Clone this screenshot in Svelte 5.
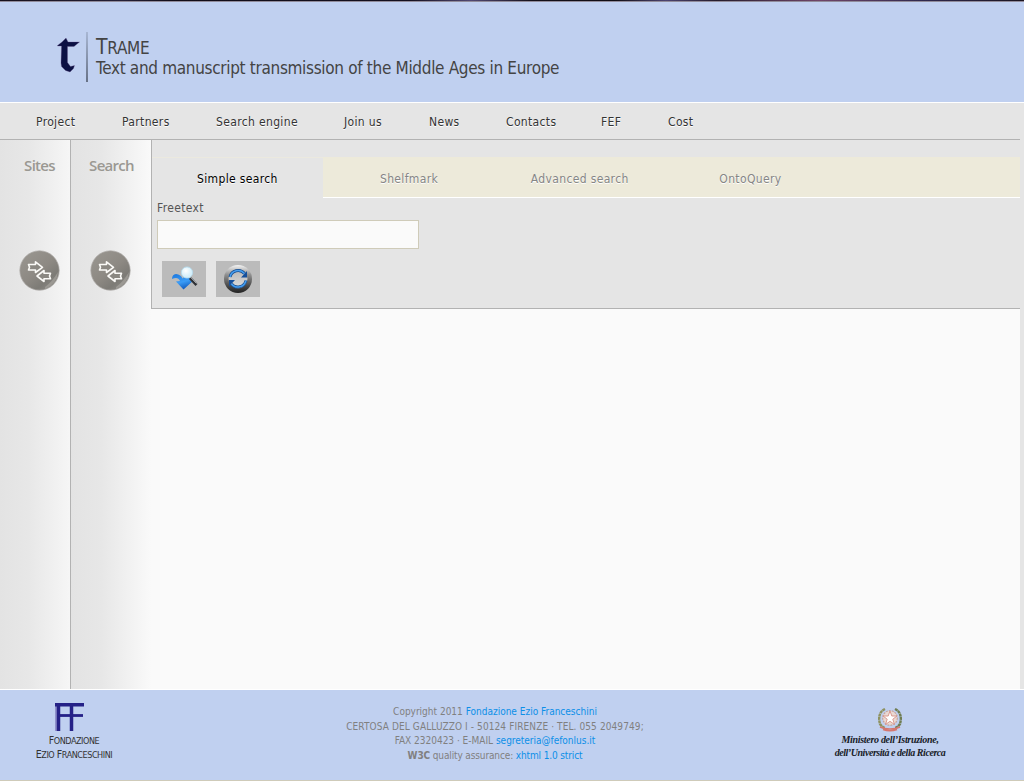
<script>
  const menu = [
    { label: 'Project', width: 86 },
    { label: 'Partners', width: 94 },
    { label: 'Search engine', width: 128 },
    { label: 'Join us', width: 85 },
    { label: 'News', width: 77 },
    { label: 'Contacts', width: 95 },
    { label: 'FEF', width: 67 },
    { label: 'Cost', width: 72 }
  ];
  const tabs = ['Simple search', 'Shelfmark', 'Advanced search', 'OntoQuery'];
  const panels = ['Sites', 'Search'];
  let active = $state(0);
  let query = $state('');
</script>

<div class="page">
  <header>
    <svg class="logo" width="30" height="50" viewBox="0 0 30 50">
      <path d="M1.500 13.500 L6 10 L10 6 L12 10 L23.500 10 L18 14.500 H11.500 V30.500 L14.500 34.500 L18.500 33.500 L17.500 36.500 L14 40 L9.500 38.500 L5.500 34.500 L5 31 L5.500 14 L1.500 14Z" fill="#0b1043" stroke="#6b4d84" stroke-width=".3" />
    </svg>
    <div class="titles">
      <h1>T<small>RAME</small></h1>
      <p>Text and manuscript transmission of the Middle Ages in Europe</p>
    </div>
  </header>

  <div class="body">
    <nav>
      {#each menu as item}
        <a href="#top" style:width="{item.width}px">{item.label}</a>
      {/each}
    </nav>
    <div class="columns">
      {#each panels as name}
        <aside>
          <h2>{name}</h2>
          <svg width="42" height="42" viewBox="0 0 42 42">
            <defs>
              <linearGradient id="disc-{name}" x1="0" y1="0" x2=".8" y2="1">
                <stop offset="0" stop-color="#9b9892" />
                <stop offset=".55" stop-color="#8d8983" />
                <stop offset=".8" stop-color="#7d7b76" />
                <stop offset="1" stop-color="#8d8b87" />
              </linearGradient>
            </defs>
            <circle cx="21.500" cy="20.500" r="19.700" fill="url(#disc-{name})" stroke="#b0aeaa" stroke-width=".7" />
            <path d="M27 37 Q34 32 40 22 Q39 34 27 39Z" fill="#a5a29d" opacity=".7" />
            <g fill="#8b8882" stroke="#fbfaf7" stroke-width="1.600" stroke-linejoin="round">
              <path d="M10.500 14.500 H17.500 V11.800 L24.500 17.300 L17.500 22.500 V20 H10.500 L11.500 17.300Z" />
              <path d="M19 26 L26 20.500 V23.300 H32.500 L31.500 26 L32.500 28.800 H26 V31.500Z" />
            </g>
          </svg>
        </aside>
      {/each}
      <main>
        <section>
          <div class="tabs">
            {#each tabs as tab, i}
              <button class="tab" class:active={i === active} onclick={() => (active = i)}>{tab}</button>
            {/each}
          </div>
          <form onsubmit={(e) => e.preventDefault()}>
            <label for="freetext">Freetext</label>
            <input id="freetext" type="text" bind:value={query} />
            <div class="actions">
              <button type="submit" aria-label="Search">
                <svg width="44" height="36" viewBox="0 0 44 36">
                  <defs>
                    <linearGradient id="arrow" x1="0" y1="0" x2=".4" y2="1">
                      <stop offset="0" stop-color="#1b76dd" /><stop offset=".6" stop-color="#3b9cf6" /><stop offset="1" stop-color="#1560c2" />
                    </linearGradient>
                    <radialGradient id="lens" cx=".4" cy=".35">
                      <stop offset="0" stop-color="#fff" /><stop offset="1" stop-color="#d5effa" />
                    </radialGradient>
                  </defs>
                  <path d="M10 18 Q10 13.500 14 13 Q19 13.500 20.500 17.500 L23 15 L32 19 L21.500 28.500 L14 20.500 L18 20 Q16 15 10 18Z" fill="url(#arrow)" />
                  <path d="M28 17 L34.500 24" stroke="#303236" stroke-width="2.800" />
                  <path d="M28.300 16 L34.500 22.500" stroke="#b4babd" stroke-width=".9" />
                  <circle cx="25" cy="11.500" r="5.600" fill="url(#lens)" stroke="#b3dcf0" stroke-width=".8" />
                </svg>
              </button>
              <button type="reset" aria-label="Reset" onclick={() => (query = '')}>
                <svg width="44" height="36" viewBox="0 0 44 36">
                  <defs>
                    <linearGradient id="rim" x1="0" y1="0" x2="0" y2="1">
                      <stop offset="0" stop-color="#f4f4f4" /><stop offset=".35" stop-color="#8f8f8f" /><stop offset=".75" stop-color="#484848" /><stop offset="1" stop-color="#222" />
                    </linearGradient>
                    <linearGradient id="hub" x1="0" y1="0" x2="0" y2="1"><stop offset="0" stop-color="#b5b5b5" /><stop offset="1" stop-color="#dedede" /></linearGradient>
                  </defs>
                  <circle cx="22" cy="18" r="14" fill="url(#rim)" />
                  <circle cx="22" cy="17.700" r="9.500" fill="url(#hub)" />
                  <g fill="none" stroke="#174b8c" stroke-width="3">
                    <path d="M14 16 A8.300 8.300 0 0 1 28.500 12.500" /><path d="M30 19.500 A8.300 8.300 0 0 1 15.500 23" />
                  </g>
                  <path d="M31 10 V16.500 H25Z M13 25.500 V19 H19Z" fill="#17509b" />
                  <g fill="none" stroke="#459ef0" stroke-width="1.500">
                    <path d="M14 16 A8.300 8.300 0 0 1 28.500 12.500" /><path d="M30 19.500 A8.300 8.300 0 0 1 15.500 23" />
                  </g>
                </svg>
              </button>
            </div>
          </form>
        </section>
      </main>
    </div>
  </div>

  <footer>
    <div class="fef">
      <svg width="32" height="30" viewBox="0 0 32 30">
        <path d="M2 1 V29" stroke="#8f91cb" stroke-width="2" />
        <path d="M1 2.700 H30 M4.500 1 V29 M17.500 1 V29" stroke="#252187" stroke-width="3.500" fill="none" />
        <path d="M4 13.500 H29" stroke="#252187" stroke-width="2.800" />
      </svg>
      <div>F<small>ONDAZIONE</small></div>
      <div>E<small>ZIO</small> F<small>RANCESCHINI</small></div>
    </div>
    <div class="info">
      <p class="l1">Copyright 2011 <a href="#top">Fondazione Ezio Franceschini</a></p>
      <p class="l2">CERTOSA DEL GALLUZZO I - 50124 FIRENZE · TEL. 055 2049749;</p>
      <p class="l3">FAX 2320423 · E-MAIL <a href="#top">segreteria@fefonlus.it</a></p>
      <p class="l4"><b>W3C</b> quality assurance: <a href="#top">xhtml 1.0 strict</a></p>
    </div>
    <div class="ministry">
      <svg width="24" height="27" viewBox="48 0 24 27">
        <g fill="none">
          <path d="M55 3 Q47 7 50 18 Q52 21 55 22" stroke="#8d915f" stroke-width="2.400" stroke-dasharray="3 .4" />
          <path d="M65 3 Q73 7 70 18 Q68 21 65 22" stroke="#6f7d52" stroke-width="2.400" stroke-dasharray="3 .4" />
          <circle cx="60" cy="12" r="7.300" fill="#ead9d2" stroke="#c6a49c" stroke-width="1.200" stroke-dasharray="2 1" />
          <path d="M60 5 L61.800 10 H67 L62.800 13.200 L64.500 18.500 L60 15.300 L55.500 18.500 L57.200 13.200 L53 10 H58.200Z" fill="#fff" stroke="#d79187" stroke-width=".9" />
          <path d="M50 21 Q54 23 60 23 Q66 23 70 21 M53 23.500 Q60 26 67 23.500" stroke="#d5766f" stroke-width="1.700" />
        </g>
      </svg>
      <div>Ministero dell’Istruzione,</div>
      <div class="second">dell’Università e della Ricerca</div>
    </div>
  </footer>
</div>

<style>
  :global(body) { margin: 0; background: #fff; }
  * { box-sizing: border-box; }
  h1, h2, p { margin: 0; font-weight: 400; }
  a { text-decoration: none; }
  button { border: 0; padding: 0; font: inherit; letter-spacing: inherit; cursor: pointer; }
  .page {
    height: 782px;
    display: flex;
    flex-direction: column;
    overflow: hidden;
    font: 12px/18px Tahoma, 'DejaVu Sans Condensed', 'DejaVu Sans', sans-serif;
    font-stretch: condensed;
    letter-spacing: .35px;
    color: #444;
    border-bottom: 1px solid #fff;
  }
  header {
    flex: none;
    height: 103px;
    background:
      linear-gradient(90deg, #17101c, #252037 12%, #120d18 17%, #15101f 40%, #514872 46%, #15101a 52%, #110d14 60%, #4c4370 65%, #251c2c 70%, #704568 80%, #30294e 90%, #1b1420) 0 0 / 100% 1px no-repeat,
      linear-gradient(#918c9b, #918c9b) 0 1px / 100% 1px no-repeat,
      #c0d0f0;
    border-bottom: 1px solid #fff;
    display: flex;
    padding: 32px 0 0 56px;
  }
  .logo { display: block; width: 30px; }
  .titles {
    height: 50px;
    padding: 3px 0 0 8px;
    border-left: 2px solid;
    border-image: linear-gradient(#a9b8d5, #667084) 1;
    color: #444;
  }
  h1 { font-size: 21px; line-height: 24px; letter-spacing: -.3px; }
  h1 small { font-size: 17px; }
  .titles p { font-size: 17px; line-height: 20px; letter-spacing: -.32px; margin-top: -2px; white-space: nowrap; }
  .body { height: 586px; flex: none; background: #e5e5e5; padding-right: 4px; }
  nav { height: 37px; border-bottom: 1px solid #b2b2b2; display: flex; padding-left: 13px; }
  nav a { flex: none; padding: 1px 0 0 23px; line-height: 37px; height: 36px; color: #333; white-space: nowrap; text-shadow: 0 1px #fff; }
  .columns { display: flex; height: 549px; }
  aside {
    flex: none;
    width: 71px;
    border-right: 1px solid #b2b2b2;
    background: linear-gradient(90deg, #e3e3e3, #e7e7e7 40%, #f6f6f6);
    display: flex;
    flex-direction: column;
    align-items: center;
    padding: 13px 0 0 9px;
  }
  aside + aside { width: 81px; border: 0; padding-left: 0; background: linear-gradient(90deg, #e3e3e3, #e7e7e7 38%, #f7f7f7 90%, #fafafa); }
  h2 { font: 600 15px/24px 'Open Sans', sans-serif; font-stretch: normal; letter-spacing: -.7px; color: #9a9892; }
  aside svg { margin: 73px 0 0 -1px; }
  aside + aside svg { margin-left: -3px; }
  main { flex: 1; background: #fafafa; margin-left: -1px; }
  section { height: 169px; background: #e5e5e5; border-left: 1px solid #b2b2b2; border-bottom: 1px solid #b2b2b2; padding-top: 17px; }
  .tabs { height: 41px; display: flex; background: #edeada; border-bottom: 1px solid #fff; }
  .tab { width: 170.700px; height: 40px; padding: 3px 0 0 2px; background: none; color: #858585; text-shadow: 0 1px #fff; }
  .tab.active { height: 41px; padding: 1px 0 0; background: #e5e5e5; color: #000; border-top: 1px solid #ebe9df; }
  form { padding: 1px 0 0 5px; }
  label { display: block; height: 21px; color: #555; }
  input { display: block; width: 262px; height: 29px; border: 1px solid #cfcbb9; background: #fafafa; padding: 4px; font: inherit; }
  .actions { display: flex; gap: 10px; padding: 12px 0 0 5px; }
  .actions button { width: 44px; height: 36px; background: #bbb; }
  .actions svg { display: block; }
  footer {
    flex: none;
    height: 92px;
    background: #c0d0f0;
    border-top: 1px solid #fff;
    border-bottom: 1px solid #cfcbb9;
    display: grid;
    grid-template-columns: 346px 298px 1fr;
  }
  .fef { width: 78px; margin-left: 35px; padding-top: 12px; display: flex; flex-direction: column; align-items: center; font-size: 10.500px; line-height: 13px; letter-spacing: -.45px; color: #333; white-space: nowrap; }
  .fef svg { margin: 0 0 2px -8px; }
  .fef small { font-size: 9px; }
  .info { padding-top: 15px; font-size: 10px; line-height: 14.700px; letter-spacing: 0; color: #808080; text-align: center; white-space: nowrap; }
  .info a { color: #0b8fe8; }
  .l2 { letter-spacing: .1px; }
  .l3 { letter-spacing: -.01px; }
  .l4 { letter-spacing: -.13px; }
  .ministry {
    width: 120px;
    margin: 16px 0 0 186px;
    display: flex;
    flex-direction: column;
    align-items: center;
    font: italic 700 10px/13px 'URW Chancery L', 'Liberation Serif', serif;
    letter-spacing: -.3px;
    color: #171b27;
    white-space: nowrap;
  }
  .second { letter-spacing: -.45px; }
</style>
